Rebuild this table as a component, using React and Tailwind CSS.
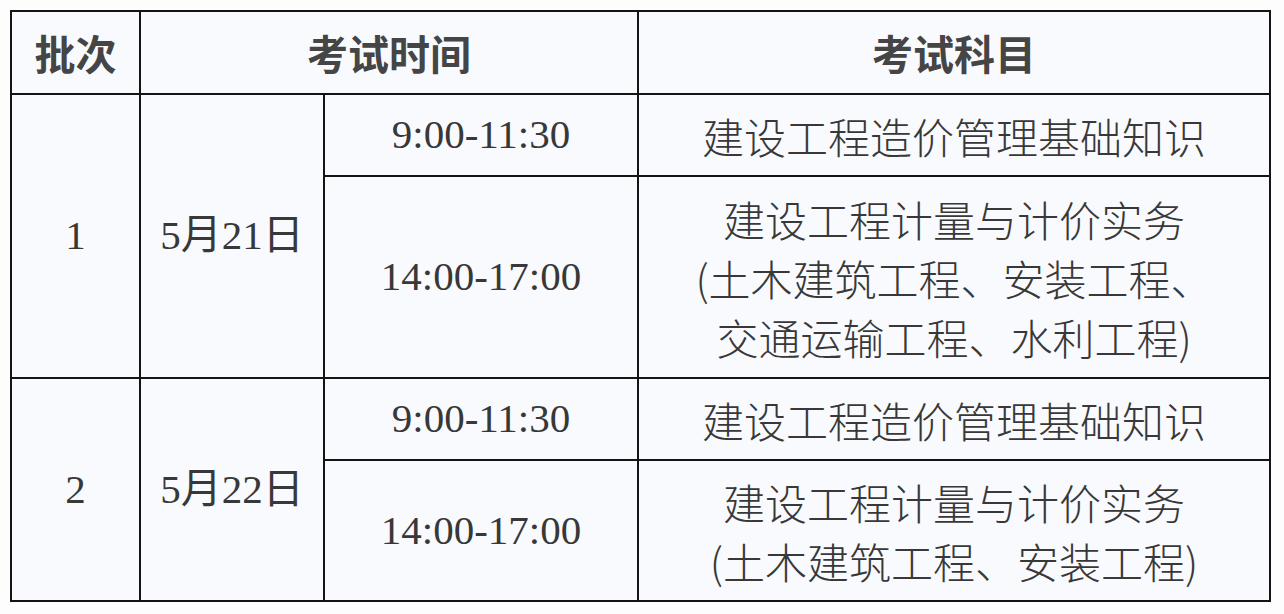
import React from 'react';

const cjk = "font-['Noto_Sans_CJK_SC',sans-serif]";
const serif = "font-['Liberation_Serif','Noto_Sans_CJK_SC',serif]";
const cell = 'border-2 border-[#141414] text-center align-middle p-0';

export default function App() {
  return (
    <div className="min-h-screen w-[1284px] bg-[#fdfdfd] p-[10px] text-[#383838]">
      <table className="table-fixed border-collapse w-[1259px] bg-[#f9fafd]">
        <colgroup>
          <col className="w-[129px]" />
          <col className="w-[184px]" />
          <col className="w-[314px]" />
          <col className="w-[632px]" />
        </colgroup>
        <thead>
          <tr className="h-[83px]">
            <th className={`${cell} ${cjk} text-[41px] font-bold text-[#454545]`}>批次</th>
            <th colSpan={2} className={`${cell} ${cjk} text-[41px] font-bold text-[#454545]`}>考试时间</th>
            <th className={`${cell} ${cjk} text-[41px] font-bold text-[#454545]`}>考试科目</th>
          </tr>
        </thead>
        <tbody className="text-[41px]">
          <tr className="h-[82px]">
            <td rowSpan={2} className={`${cell} ${serif}`}>1</td>
            <td rowSpan={2} className={`${cell} ${serif}`}>5月21日</td>
            <td className={`${cell} ${serif}`}>9:00-11:30</td>
            <td className={`${cell} ${cjk} font-light text-[42px]`}>建设工程造价管理基础知识</td>
          </tr>
          <tr className="h-[202px]">
            <td className={`${cell} ${serif}`}>14:00-17:00</td>
            <td className={`${cell} ${cjk} font-light text-[42px] leading-[59px]`}>
              建设工程计量与计价实务<br />
              (土木建筑工程、安装工程、<br />
              交通运输工程、水利工程)
            </td>
          </tr>
          <tr className="h-[82px]">
            <td rowSpan={2} className={`${cell} ${serif}`}>2</td>
            <td rowSpan={2} className={`${cell} ${serif}`}>5月22日</td>
            <td className={`${cell} ${serif}`}>9:00-11:30</td>
            <td className={`${cell} ${cjk} font-light text-[42px]`}>建设工程造价管理基础知识</td>
          </tr>
          <tr className="h-[141px]">
            <td className={`${cell} ${serif}`}>14:00-17:00</td>
            <td className={`${cell} ${cjk} font-light text-[42px] leading-[59px]`}>
              建设工程计量与计价实务<br />
              (土木建筑工程、安装工程)
            </td>
          </tr>
        </tbody>
      </table>
    </div>
  );
}
